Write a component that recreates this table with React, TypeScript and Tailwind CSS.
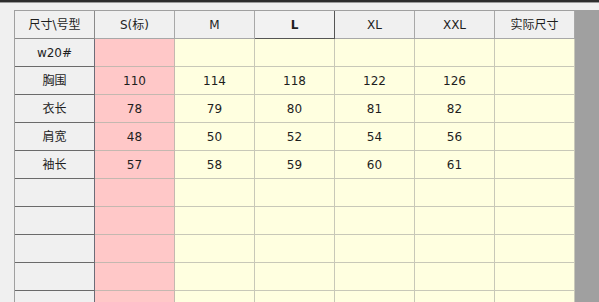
const headers = ["尺寸\\号型", "S(标)", "M", "L", "XL", "XXL", "实际尺寸"];

const rows: { label: string; values: string[] }[] = [
  { label: "w20#", values: ["", "", "", "", "", ""] },
  { label: "胸围", values: ["110", "114", "118", "122", "126", ""] },
  { label: "衣长", values: ["78", "79", "80", "81", "82", ""] },
  { label: "肩宽", values: ["48", "50", "52", "54", "56", ""] },
  { label: "袖长", values: ["57", "58", "59", "60", "61", ""] },
  { label: "", values: ["", "", "", "", "", ""] },
  { label: "", values: ["", "", "", "", "", ""] },
  { label: "", values: ["", "", "", "", "", ""] },
  { label: "", values: ["", "", "", "", "", ""] },
  { label: "", values: ["", "", "", "", "", ""] },
];

const App = () => {
  return (
    <div
      className="w-[599px] h-[302px] overflow-hidden bg-[#f0f0f0] text-[12px] text-[#1e1e1e]"
      style={{ fontFamily: '"DejaVu Sans", "Noto Sans CJK SC", sans-serif' }}
    >
      {/* top edge */}
      <div className="h-[2px] bg-[#2e2e2e]" />
      <div className="h-[1px] bg-[#9a9a9a]" />
      <div className="h-[7px] bg-[#f0f0f0]" />

      <div className="flex">
        <div className="w-[14px] shrink-0 bg-[#f0f0f0]" />
        <div className="flex-none border-l border-t border-[#a0a0a0]">
          {/* header */}
          <div className="flex h-[28px]">
            {headers.map((h, i) => (
              <div
                key={i}
                className={
                  i === 3
                    ? "w-[80px] h-[28px] flex items-center justify-center bg-[#f2f2f2] border-r border-b border-[#555] font-bold"
                    : i === 0
                    ? "w-[80px] h-[28px] flex items-center justify-center bg-[#f0f0f0] border-r border-b border-[#8a8a8a]"
                    : "w-[80px] h-[28px] flex items-center justify-center bg-[#f0f0f0] border-r border-b border-[#a8a8a8]"
                }
              >
                {h}
              </div>
            ))}
          </div>
          {/* body */}
          {rows.map((r, ri) => (
            <div key={ri} className="flex h-[28px]">
              <div className="w-[80px] h-[28px] flex items-center justify-center bg-[#f0f0f0] border-r border-b border-r-[#6c6c78] border-b-[#6a6a6a]">
                {r.label}
              </div>
              {r.values.map((v, vi) => (
                <div
                  key={vi}
                  className={
                    vi === 0
                      ? "w-[80px] h-[28px] flex items-center justify-center bg-[#ffc8c8] border-r border-b border-[#c4b8b0]"
                      : "w-[80px] h-[28px] flex items-center justify-center bg-[#ffffe0] border-r border-b border-[#c8c8b8]"
                  }
                >
                  {v}
                </div>
              ))}
            </div>
          ))}
        </div>
        <div className="flex-1 bg-[#a0a0a0]" />
      </div>
    </div>
  );
};

export default App;
